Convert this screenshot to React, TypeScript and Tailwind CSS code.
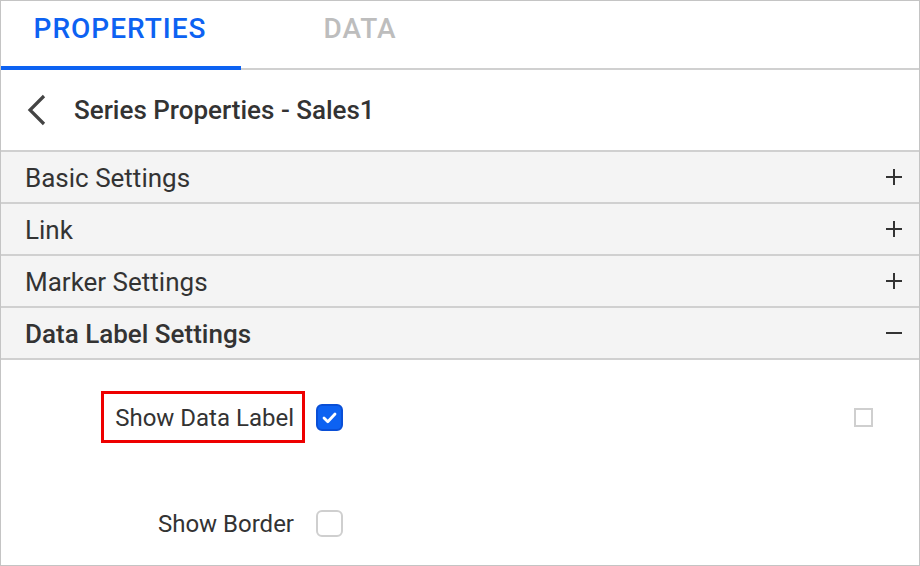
import React from "react";

const rows = [
  { title: "Basic Settings", open: false },
  { title: "Link", open: false },
  { title: "Marker Settings", open: false },
  { title: "Data Label Settings", open: true },
];

function PlusIcon() {
  return (
    <svg width="18" height="18" viewBox="0 0 18 18" className="text-[#333]">
      <path d="M9 1v16M1 9h16" stroke="currentColor" strokeWidth="2" />
    </svg>
  );
}

function MinusIcon() {
  return (
    <svg width="18" height="18" viewBox="0 0 18 18" className="text-[#333]">
      <path d="M1 9h16" stroke="currentColor" strokeWidth="2" />
    </svg>
  );
}

function CheckBox({ checked }: { checked: boolean }) {
  if (checked) {
    return (
      <span className="flex h-[27px] w-[27px] items-center justify-center rounded-[6px] border-2 border-[#0a4fd6] bg-[#0d62f2]">
        <svg width="17" height="17" viewBox="0 0 17 17">
          <path d="M3 9l3.8 3.8L14 5" fill="none" stroke="white" strokeWidth="2.8" strokeLinecap="round" strokeLinejoin="round" />
        </svg>
      </span>
    );
  }
  return <span className="block h-[27px] w-[27px] rounded-[6px] border-2 border-[#cfcfcf] bg-white" />;
}

export default function App() {
  return (
    <div
      className="flex h-[566px] w-[920px] flex-col border border-[#c4c4c4] bg-white text-[#333]"
      style={{ fontFamily: "Roboto, 'Liberation Sans', sans-serif" }}
    >
      <div className="flex h-[69px] shrink-0 border-b-2 border-[#d0d0d0]">
        <div className="relative flex w-[240px] items-center justify-center pb-[12px] pr-[2px] text-[28px] font-medium tracking-[1px] text-[#0d62f2]">
          PROPERTIES
          <span className="absolute bottom-[-2px] left-0 h-[4px] w-full bg-[#0d62f2]" />
        </div>
        <div className="flex w-[240px] items-center justify-center pb-[12px] pr-[2px] text-[28px] font-medium tracking-[1px] text-[#bdbdbd]">
          DATA
        </div>
      </div>

      <div className="flex h-[82px] shrink-0 items-center border-b-2 border-[#d0d0d0] pl-[25px]">
        <svg width="22" height="32" viewBox="0 0 22 32" className="text-[#444]">
          <path d="M18 2L4 16l14 14" fill="none" stroke="currentColor" strokeWidth="3.2" />
        </svg>
        <span className="ml-[26px] text-[26px] font-medium text-[#333]">Series Properties - Sales1</span>
      </div>

      {rows.map((r) => (
        <div
          key={r.title}
          className="flex h-[52px] shrink-0 items-center justify-between border-b-2 border-[#d0d0d0] bg-[#f4f4f4] pl-[24px] pr-[16px] pt-[2px]"
        >
          <span className={r.open ? "text-[26px] font-medium" : "text-[26px]"}>{r.title}</span>
          <span className="-mt-[2px]">{r.open ? <MinusIcon /> : <PlusIcon />}</span>
        </div>
      ))}

      <div className="flex flex-col pt-[31px]">
        <div className="flex h-[52px] items-center">
          <div className="flex w-[304px] justify-end">
            <span className="flex h-[52px] items-center border-[3px] border-[#ee0000] pl-[11px] pr-[8px] pt-[2px] text-[24px]">
              Show Data Label
            </span>
          </div>
          <span className="ml-[11px]">
            <CheckBox checked />
          </span>
          <span className="ml-auto mr-[46px] block h-[19px] w-[19px] border-2 border-[#cfcfcf]" />
        </div>
        <div className="mt-[54px] flex h-[52px] items-center">
          <div className="flex w-[304px] justify-end">
            <span className="flex h-[52px] items-center border-[3px] border-transparent pl-[11px] pr-[8px] pt-[2px] text-[24px]">
              Show Border
            </span>
          </div>
          <span className="ml-[11px]">
            <CheckBox checked={false} />
          </span>
        </div>
      </div>
    </div>
  );
}
